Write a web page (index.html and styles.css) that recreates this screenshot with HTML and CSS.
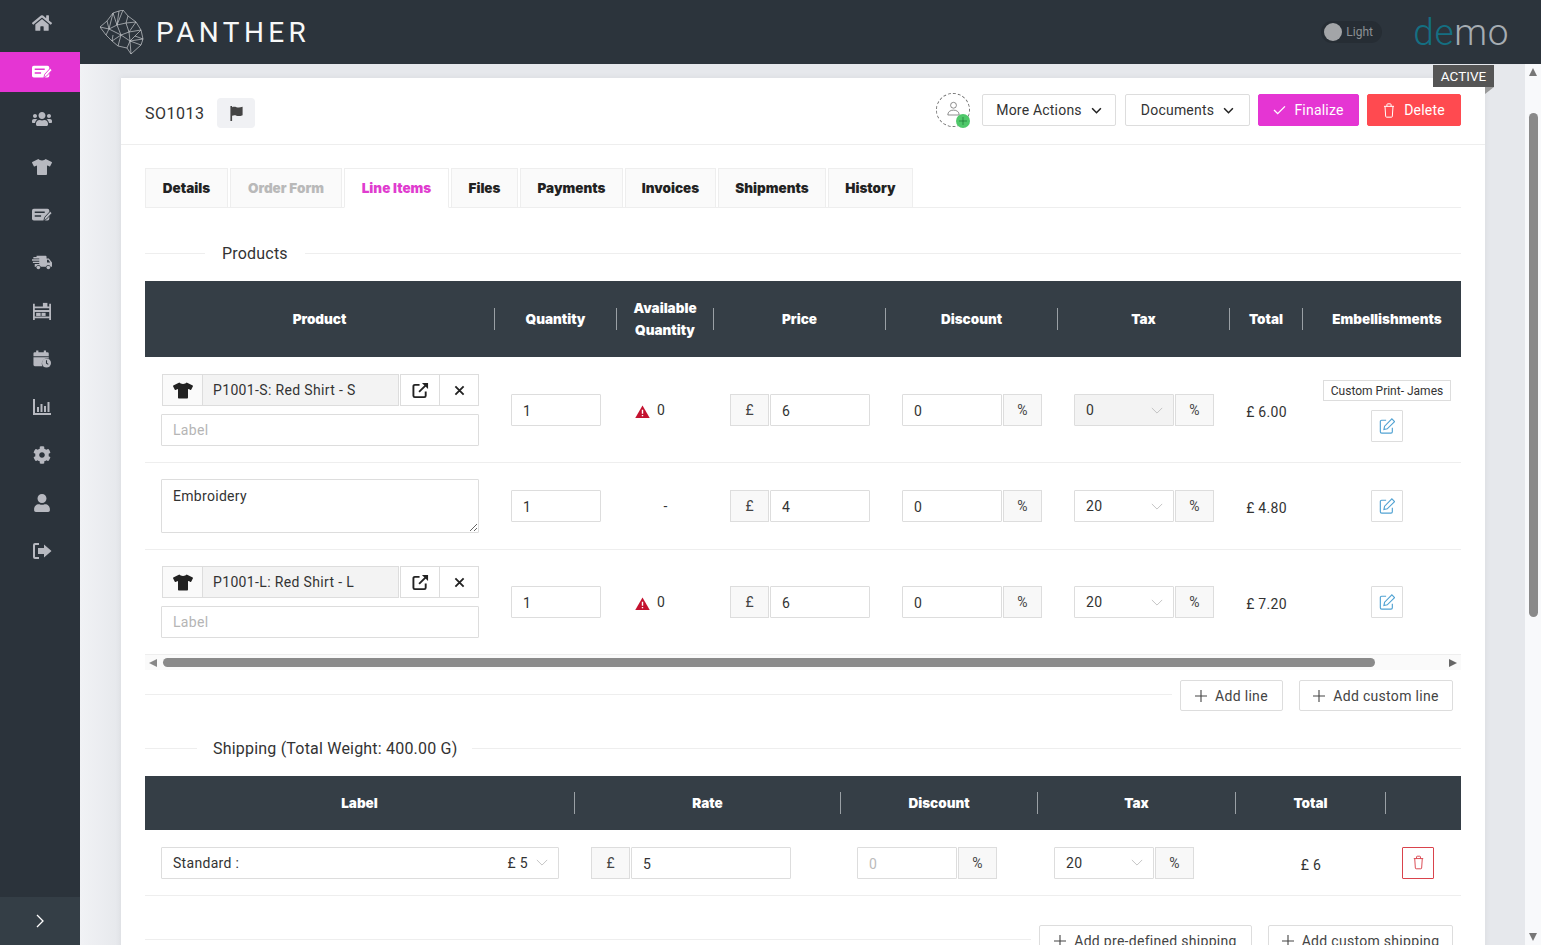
FILE: index.html
```html
<!DOCTYPE html>
<html lang="en">
<head>
<meta charset="utf-8">
<title>Panther - SO1013</title>
<link rel="stylesheet" href="styles.css">
</head>
<body>
<svg class="sprite" xmlns="http://www.w3.org/2000/svg">
  <symbol id="i-home" viewBox="0 0 576 512"><path d="M280.37 148.26L96 300.11V464a16 16 0 0 0 16 16l112.06-.29a16 16 0 0 0 15.92-16V368a16 16 0 0 1 16-16h64a16 16 0 0 1 16 16v95.64a16 16 0 0 0 16 16.05L464 480a16 16 0 0 0 16-16V300L295.67 148.26a12.19 12.19 0 0 0-15.3 0zM571.6 251.47L488 182.56V44.05a12 12 0 0 0-12-12h-56a12 12 0 0 0-12 12v72.61L318.47 43a48 48 0 0 0-61 0L4.34 251.47a12 12 0 0 0-1.6 16.9l25.5 31A12 12 0 0 0 45.15 301l235.22-193.74a12.19 12.19 0 0 1 15.3 0L530.9 301a12 12 0 0 0 16.9-1.6l25.5-31a12 12 0 0 0-1.7-16.93z"/></symbol>
  <symbol id="i-order" viewBox="0 0 22 16"><rect x="0" y="1" width="19" height="13" rx="2"/><path d="M3 5h11M3 9h7" stroke="var(--cut)" stroke-width="1.6" fill="none"/><path d="M13 14.5l1-4 6-6.5 2 2-6 6.5z" stroke="var(--cut)" stroke-width="1"/></symbol>
  <symbol id="i-users" viewBox="0 0 640 512"><path d="M96 224c35.3 0 64-28.7 64-64s-28.7-64-64-64-64 28.7-64 64 28.7 64 64 64zm448 0c35.3 0 64-28.7 64-64s-28.7-64-64-64-64 28.7-64 64 28.7 64 64 64zm32 32h-64c-17.6 0-33.5 7.1-45.1 18.6 40.3 22.1 68.9 62 75.1 109.4h66c17.7 0 32-14.3 32-32v-32c0-35.3-28.7-64-64-64zm-256 0c61.9 0 112-50.1 112-112S381.900 32 320 32 208 82.100 208 144s50.100 112 112 112zm76.800 32h-8.300c-20.800 10-43.900 16-68.500 16s-47.600-6-68.500-16h-8.300C179.600 288 128 339.600 128 403.200V432c0 26.500 21.500 48 48 48h288c26.500 0 48-21.500 48-48v-28.800c0-63.600-51.600-115.200-115.200-115.200zm-223.700-13.400C161.500 263.100 145.600 256 128 256H64c-35.300 0-64 28.700-64 64v32c0 17.700 14.300 32 32 32h65.900c6.300-47.400 34.900-87.300 75.200-109.400z"/></symbol>
  <symbol id="i-shirt" viewBox="0 0 640 512"><path d="M631.2 96.500L436.500 0C416.400 27.800 371.900 47.200 320 47.200S223.600 27.800 203.500 0L8.800 96.500c-7.900 4-11.100 13.600-7.200 21.500l57.200 114.500c4 7.900 13.600 11.100 21.500 7.200l56.600-27.700c10.600-5.200 23 2.500 23 14.400V480c0 17.700 14.300 32 32 32h256c17.700 0 32-14.300 32-32V226.300c0-11.800 12.400-19.600 23-14.400l56.600 27.700c7.900 4 17.500.8 21.500-7.200L638.300 118c4-7.900.8-17.600-7.100-21.500z"/></symbol>
  <symbol id="i-truck" viewBox="0 0 22 16"><path d="M5 0h10a1 1 0 0 1 1 1v2h2.500L22 7.500V12h-1.600a2.600 2.600 0 0 0-5 0H9.600a2.600 2.600 0 0 0-5 0H3V9h5V8H1V6.500h7v-1H0V4h8V3H1.500V1.500H5z"/><circle cx="7" cy="13" r="2"/><circle cx="18" cy="13" r="2"/><path d="M16.500 4.500V7.500h3.500l-2-3z" fill="var(--cut)"/></symbol>
  <symbol id="i-pallet" viewBox="0 0 20 20"><path d="M0 2h2v3h16V2h2v18h-2v-2H2v2H0zM2 7v2h16V7zM2 11v5h16v-5z"/><rect x="11" y="1" width="5" height="5"/><rect x="3.500" y="12" width="5" height="3.500"/><rect x="9.500" y="12" width="4.500" height="3.500"/></symbol>
  <symbol id="i-calendar" viewBox="0 0 22 20"><path d="M1.500 4A1.500 1.500 0 0 1 3 2.500h1.500V.5h2.500v2h6v-2h2.500v2H17A1.500 1.500 0 0 1 18.500 4v3H1.500zM1.500 8h17v1.500a6 6 0 0 0-7 8.500H3a1.500 1.500 0 0 1-1.500-1.500z"/><circle cx="16" cy="14.500" r="5"/><path d="M16 11.500v3.200l2 1.300" stroke="var(--cut)" stroke-width="1.200" fill="none"/></symbol>
  <symbol id="i-chart" viewBox="0 0 20 18"><path d="M1 1h2v14h16v2H1z"/><rect x="5" y="9" width="2" height="5"/><rect x="8.500" y="6" width="2" height="8"/><rect x="12" y="8" width="2" height="6"/><rect x="15.500" y="4" width="2" height="10"/></symbol>
  <symbol id="i-cog" viewBox="0 0 512 512"><path d="M487.400 315.700l-42.600-24.600c4.300-23.200 4.300-47 0-70.200l42.600-24.600c4.900-2.800 7.100-8.600 5.500-14-11.100-35.600-30-67.800-54.700-94.600-3.800-4.100-10-5.100-14.800-2.300L380.800 110c-17.900-15.400-38.500-27.300-60.800-35.100V25.800c0-5.600-3.900-10.500-9.400-11.700-36.700-8.200-74.300-7.800-109.200 0-5.500 1.200-9.400 6.100-9.400 11.700V75c-22.200 7.900-42.800 19.800-60.800 35.100L88.700 85.500c-4.900-2.800-11-1.900-14.800 2.300-24.700 26.700-43.600 58.900-54.700 94.600-1.700 5.400.6 11.200 5.500 14L67.300 221c-4.300 23.200-4.300 47 0 70.200l-42.600 24.600c-4.900 2.800-7.100 8.600-5.500 14 11.100 35.600 30 67.800 54.700 94.600 3.800 4.100 10 5.100 14.800 2.300l42.600-24.600c17.900 15.400 38.500 27.300 60.800 35.100v49.200c0 5.600 3.900 10.500 9.400 11.700 36.700 8.200 74.300 7.800 109.200 0 5.500-1.200 9.400-6.100 9.400-11.700v-49.200c22.200-7.900 42.800-19.800 60.800-35.100l42.600 24.600c4.900 2.800 11 1.900 14.800-2.300 24.700-26.700 43.600-58.900 54.700-94.600 1.500-5.500-.7-11.300-5.600-14.100zM256 336c-44.100 0-80-35.900-80-80s35.900-80 80-80 80 35.900 80 80-35.900 80-80 80z"/></symbol>
  <symbol id="i-user" viewBox="0 0 448 512"><path d="M224 256c70.700 0 128-57.300 128-128S294.700 0 224 0 96 57.300 96 128s57.300 128 128 128zm89.600 32h-16.700c-22.200 10.200-46.900 16-72.900 16s-50.600-5.800-72.900-16h-16.700C60.200 288 0 348.200 0 422.400V464c0 26.500 21.500 48 48 48h352c26.500 0 48-21.500 48-48v-41.600c0-74.200-60.200-134.400-134.400-134.400z"/></symbol>
  <symbol id="i-logout" viewBox="0 0 20 18"><path d="M7 1v2H3.500A.5.500 0 0 0 3 3.500v11a.5.500 0 0 0 .5.500H7v2H3a2 2 0 0 1-2-2V3a2 2 0 0 1 2-2z"/><path d="M12 2.500l7.500 6.500-7.500 6.500V12H6V6h6z"/></symbol>
  <symbol id="i-open" viewBox="0 0 18 18"><path d="M8 3H3a1.500 1.500 0 0 0-1.500 1.500v10A1.500 1.500 0 0 0 3 16h10a1.500 1.500 0 0 0 1.500-1.500V10" fill="none" stroke="currentColor" stroke-width="2"/><path d="M7.500 10.500L15 3" fill="none" stroke="currentColor" stroke-width="2"/><path d="M10.500 1H17v6.500z"/></symbol>
  <symbol id="i-x" viewBox="0 0 12 12"><path d="M1.500 1.500l9 9m0-9l-9 9" fill="none" stroke="currentColor" stroke-width="2"/></symbol>
  <symbol id="i-warn" viewBox="0 0 16 14"><path d="M8 0.500L15.800 14H.2z"/><path d="M8 5v4.500M8 10.800v1.400" stroke="#fff" stroke-width="1.500" fill="none"/></symbol>
  <symbol id="i-edit" viewBox="0 0 18 18"><path d="M8 2.500H3A1.500 1.500 0 0 0 1.500 4v11.500A1.500 1.500 0 0 0 3 17h10.500a1.500 1.500 0 0 0 1.500-1.500V11" fill="none" stroke="currentColor" stroke-width="1.300"/><path d="M5.500 13l.8-3.800L14.500 1l3 3-8.200 8.200z" fill="none" stroke="currentColor" stroke-width="1.300"/></symbol>
  <symbol id="i-down" viewBox="0 0 14 8"><path d="M1 1l6 6 6-6" fill="none" stroke="currentColor" stroke-width="1"/></symbol>
  <symbol id="i-chev" viewBox="0 0 12 8"><path d="M1 1.500l5 5 5-5" fill="none" stroke="currentColor" stroke-width="1.800"/></symbol>
  <symbol id="i-plus" viewBox="0 0 12 12"><path d="M6 0v12M0 6h12" fill="none" stroke="currentColor" stroke-width="1.100"/></symbol>
  <symbol id="i-trash" viewBox="0 0 14 18"><path d="M1 4h12M4.500 4V2a1 1 0 0 1 1-1h3a1 1 0 0 1 1 1v2M2.200 4l.8 12a1 1 0 0 0 1 1h6a1 1 0 0 0 1-1l.8-12" fill="none" stroke="currentColor" stroke-width="1.200"/></symbol>
</svg>

<nav class="sidebar">
  <a class="nav-item"><svg class="nav-icon"><use href="#i-home"/></svg></a>
  <a class="nav-item active"><svg class="nav-icon"><use href="#i-order"/></svg></a>
  <a class="nav-item"><svg class="nav-icon"><use href="#i-users"/></svg></a>
  <a class="nav-item"><svg class="nav-icon"><use href="#i-shirt"/></svg></a>
  <a class="nav-item"><svg class="nav-icon"><use href="#i-order"/></svg></a>
  <a class="nav-item"><svg class="nav-icon"><use href="#i-truck"/></svg></a>
  <a class="nav-item"><svg class="nav-icon"><use href="#i-pallet"/></svg></a>
  <a class="nav-item"><svg class="nav-icon"><use href="#i-calendar"/></svg></a>
  <a class="nav-item"><svg class="nav-icon"><use href="#i-chart"/></svg></a>
  <a class="nav-item"><svg class="nav-icon"><use href="#i-cog"/></svg></a>
  <a class="nav-item"><svg class="nav-icon"><use href="#i-user"/></svg></a>
  <a class="nav-item"><svg class="nav-icon"><use href="#i-logout"/></svg></a>
  <div class="nav-toggle"><svg class="toggle-chevron" viewBox="0 0 8 14"><path d="M1 1l6 6-6 6" fill="none" stroke="currentColor" stroke-width="1.300"/></svg></div>
</nav>

<div class="shell">
  <header class="topbar">
    <svg class="logo-mark" viewBox="0 0 46 46" fill="none" stroke="#c9cccf" stroke-width=".7">
      <path d="M0 17L7 11 13 3 19 1 23 0 28 6 36 12 41 20 43 29 41 35 31 44 27 38 18 36 12 31 6 25z"/>
      <path d="M0 17L9 19 13 3M7 11L9 19 6 25M9 19L17 15 13 3M17 15L19 1M17 15L23 0M17 15L26 13 28 6M26 13L36 12M26 13L29 22 41 20M29 22L36 12M17 15L21 25 9 19M21 25L29 22M21 25L12 31M21 25L18 36M21 25L30 31 29 22M30 31L43 29M30 31L27 38M30 31L31 44M30 31L41 35M35 26L41 20M35 26L43 29M35 26L30 31M13 25L12 31"/>
    </svg>
    <span class="logo-text">PANTHER</span>
    <div class="topbar-right">
      <div class="theme-toggle"><span class="theme-dot"></span><span>Light</span></div>
      <div class="brand-demo"><span class="brand-de">de</span>mo</div>
    </div>
  </header>

  <div class="workspace">
    <main class="content">
      <section class="card">
        <div class="ribbon">ACTIVE</div>
        <div class="card-head">
          <span class="order-no">SO1013</span>
          <button class="flag-btn"><svg class="flag-icon" viewBox="0 0 16 16"><path d="M1.500 0h1.800v1.200C5 .5 6.500.6 8 1.200s3.500.7 6.500-.4v9c-3 1.200-5 1.100-6.500.5s-3-.6-4.700.1V16H1.500z"/></svg></button>
          <div class="head-actions">
            <div class="assign">
              <svg class="assign-user" viewBox="0 0 16 18" fill="none" stroke="#666" stroke-width=".9"><circle cx="8" cy="5" r="3.600"/><path d="M1 17c0-4 3-6 7-6s7 2 7 6z"/></svg>
              <span class="assign-plus"><svg class="assign-plus-icon"><use href="#i-plus"/></svg></span>
            </div>
            <button class="btn btn-more">More Actions <svg class="btn-chevron"><use href="#i-chev"/></svg></button>
            <button class="btn btn-docs">Documents <svg class="btn-chevron"><use href="#i-chev"/></svg></button>
            <button class="btn btn-finalize"><svg class="btn-check" viewBox="0 0 14 11"><path d="M1 5.500l4 4 8-8" fill="none" stroke="currentColor" stroke-width="1.500"/></svg>Finalize</button>
            <button class="btn btn-delete"><svg class="btn-trash"><use href="#i-trash"/></svg>Delete</button>
          </div>
        </div>

        <div class="card-body">
          <div class="tabs">
            <a class="tab">Details</a>
            <a class="tab tab-muted">Order Form</a>
            <a class="tab tab-active">Line Items</a>
            <a class="tab">Files</a>
            <a class="tab">Payments</a>
            <a class="tab">Invoices</a>
            <a class="tab">Shipments</a>
            <a class="tab">History</a>
          </div>

          <h3 class="legend legend-products"><span>Products</span></h3>

          <div class="table">
            <div class="t-row t-head products-grid products-head">
              <div class="th"><span>Product</span></div>
              <div class="th"><span>Quantity</span></div>
              <div class="th"><span>Available<br>Quantity</span></div>
              <div class="th"><span>Price</span></div>
              <div class="th"><span>Discount</span></div>
              <div class="th"><span>Tax</span></div>
              <div class="th"><span>Total</span></div>
              <div class="th th-last"><span>Embellishments</span></div>
            </div>

            <div class="t-row products-grid row-first">
              <div class="td td-product">
                <div class="group">
                  <span class="addon addon-shirt"><svg class="shirt-icon"><use href="#i-shirt"/></svg></span>
                  <span class="readonly">P1001-S: Red Shirt - S</span>
                  <span class="addon addon-white addon-open"><svg class="open-icon"><use href="#i-open"/></svg></span>
                  <span class="addon addon-white addon-close"><svg class="x-icon"><use href="#i-x"/></svg></span>
                </div>
                <input class="input input-label" placeholder="Label">
              </div>
              <div class="td"><input class="input" value="1"></div>
              <div class="td td-stock"><svg class="warn-icon"><use href="#i-warn"/></svg><span>0</span></div>
              <div class="td"><div class="group"><span class="addon addon-unit">£</span><input class="input input-join" value="6"></div></div>
              <div class="td"><div class="group"><input class="input input-join" value="0"><span class="addon addon-unit">%</span></div></div>
              <div class="td"><div class="group"><div class="select select-disabled"><span>0</span><svg class="select-chevron"><use href="#i-down"/></svg></div><span class="addon addon-unit">%</span></div></div>
              <div class="td td-center td-total">£ 6.00</div>
              <div class="td td-center td-emb">
                <span class="emb-tag">Custom Print- James</span>
                <button class="icon-btn"><svg class="edit-icon"><use href="#i-edit"/></svg></button>
              </div>
            </div>

            <div class="t-row products-grid">
              <div class="td td-product"><textarea class="textarea">Embroidery</textarea></div>
              <div class="td"><input class="input" value="1"></div>
              <div class="td td-center td-avail"><span>-</span></div>
              <div class="td"><div class="group"><span class="addon addon-unit">£</span><input class="input input-join" value="4"></div></div>
              <div class="td"><div class="group"><input class="input input-join" value="0"><span class="addon addon-unit">%</span></div></div>
              <div class="td"><div class="group"><div class="select"><span>20</span><svg class="select-chevron"><use href="#i-down"/></svg></div><span class="addon addon-unit">%</span></div></div>
              <div class="td td-center td-total">£ 4.80</div>
              <div class="td td-center"><button class="icon-btn"><svg class="edit-icon"><use href="#i-edit"/></svg></button></div>
            </div>

            <div class="t-row products-grid">
              <div class="td td-product">
                <div class="group">
                  <span class="addon addon-shirt"><svg class="shirt-icon"><use href="#i-shirt"/></svg></span>
                  <span class="readonly">P1001-L: Red Shirt - L</span>
                  <span class="addon addon-white addon-open"><svg class="open-icon"><use href="#i-open"/></svg></span>
                  <span class="addon addon-white addon-close"><svg class="x-icon"><use href="#i-x"/></svg></span>
                </div>
                <input class="input input-label" placeholder="Label">
              </div>
              <div class="td"><input class="input" value="1"></div>
              <div class="td td-stock"><svg class="warn-icon"><use href="#i-warn"/></svg><span>0</span></div>
              <div class="td"><div class="group"><span class="addon addon-unit">£</span><input class="input input-join" value="6"></div></div>
              <div class="td"><div class="group"><input class="input input-join" value="0"><span class="addon addon-unit">%</span></div></div>
              <div class="td"><div class="group"><div class="select"><span>20</span><svg class="select-chevron"><use href="#i-down"/></svg></div><span class="addon addon-unit">%</span></div></div>
              <div class="td td-center td-total">£ 7.20</div>
              <div class="td td-center"><button class="icon-btn"><svg class="edit-icon"><use href="#i-edit"/></svg></button></div>
            </div>
          </div>

          <div class="hscroll">
            <span class="arrow arrow-left"></span>
            <span class="hscroll-thumb"></span>
            <span class="arrow arrow-right"></span>
          </div>

          <div class="add-row">
            <button class="btn btn-add"><svg class="plus-icon"><use href="#i-plus"/></svg>Add line</button>
            <button class="btn btn-add"><svg class="plus-icon"><use href="#i-plus"/></svg>Add custom line</button>
          </div>

          <h3 class="legend legend-shipping"><span>Shipping (Total Weight: 400.00 G)</span></h3>

          <div class="table">
            <div class="t-row t-head shipping-grid shipping-head">
              <div class="th"><span>Label</span></div>
              <div class="th"><span>Rate</span></div>
              <div class="th"><span>Discount</span></div>
              <div class="th"><span>Tax</span></div>
              <div class="th"><span>Total</span></div>
              <div class="th th-last"></div>
            </div>
            <div class="t-row shipping-grid shipping-row">
              <div class="td"><div class="select"><span>Standard :</span><span class="select-price">£ 5</span><svg class="select-chevron"><use href="#i-down"/></svg></div></div>
              <div class="td"><div class="group group-rate"><span class="addon addon-unit">£</span><input class="input input-join" value="5"></div></div>
              <div class="td"><div class="group group-fixed"><input class="input input-join input-muted" value="0"><span class="addon addon-unit">%</span></div></div>
              <div class="td"><div class="group group-fixed"><div class="select"><span>20</span><svg class="select-chevron"><use href="#i-down"/></svg></div><span class="addon addon-unit">%</span></div></div>
              <div class="td td-center td-total">£ 6</div>
              <div class="td td-del"><button class="icon-btn icon-btn-danger"><svg class="del-icon"><use href="#i-trash"/></svg></button></div>
            </div>
          </div>

          <div class="add-row add-row-shipping">
            <button class="btn btn-add"><svg class="plus-icon"><use href="#i-plus"/></svg>Add pre-defined shipping</button>
            <button class="btn btn-add"><svg class="plus-icon"><use href="#i-plus"/></svg>Add custom shipping</button>
          </div>
        </div>
      </section>
    </main>

    <div class="vscroll">
      <span class="arrow arrow-up"></span>
      <span class="vscroll-thumb"></span>
      <span class="arrow arrow-down"></span>
    </div>
  </div>
</div>
</body>
</html>
```

FILE: styles.css
```css
* { box-sizing: border-box; }

html, body { height: 100%; }

body {
  margin: 0;
  height: 100vh;
  overflow: hidden;
  display: flex;
  font-family: Roboto, "Liberation Sans", sans-serif;
  font-size: 14px;
  color: #333;
  background: #e9ebef;
}

.sprite { width: 0; height: 0; position: absolute; }

button, input, textarea { font: inherit; color: inherit; }

/* Sidebar */
.sidebar {
  width: 80px;
  flex: none;
  display: flex;
  flex-direction: column;
  gap: 8px;
  padding-top: 3px;
  background: #2b333b;
  --cut: #2b333b;
  color: #b7b9c0;
}

.nav-item {
  height: 40px;
  display: flex;
  align-items: center;
  justify-content: center;
  padding-left: 4px;
  fill: #b7b9c0;
}

.nav-item.active {
  margin-top: 1px;
  margin-bottom: -1px;
  background: #e535d3;
  fill: #fff;
  --cut: #e535d3;
}

.nav-icon { width: 20px; height: 18px; }

.nav-toggle {
  margin-top: auto;
  height: 48px;
  background: #343e46;
  color: #fff;
  display: flex;
  align-items: center;
  justify-content: center;
}

.toggle-chevron { width: 8px; height: 14px; }

/* Top bar */
.shell {
  flex: 1;
  min-width: 0;
  display: flex;
  flex-direction: column;
}

.topbar {
  height: 64px;
  flex: none;
  display: flex;
  align-items: center;
  padding: 0 32px 0 20px;
  background: #2c343c;
}

.logo-mark { width: 46px; height: 46px; margin-right: 10px; margin-top: 1px; }

.logo-text {
  font-size: 28px;
  font-weight: 400;
  letter-spacing: 4.4px;
  margin-top: 1px;
  color: #f7f8f8;
}

.topbar-right {
  margin-left: auto;
  display: flex;
  align-items: center;
  gap: 31px;
}

.theme-toggle {
  display: flex;
  align-items: center;
  gap: 4px;
  width: 61px;
  height: 22px;
  padding-left: 3px;
  border-radius: 11px;
  background: #262d34;
  font-size: 12px;
  color: #8d9195;
}

.theme-dot {
  width: 18px;
  height: 18px;
  border-radius: 50%;
  background: #a3a5a8;
}

.brand-demo {
  font-size: 37px;
  font-weight: 300;
  letter-spacing: .6px;
  color: #a6adb3;
  line-height: 1;
}

.brand-de { color: #146f82; }

/* Workspace */
.workspace {
  flex: 1;
  min-height: 0;
  display: flex;
}

.content {
  flex: 1;
  min-width: 0;
  padding: 14px 40px 0 41px;
  overflow: hidden;
  background: linear-gradient(to right, #f1f2f5, #e6e8ec 41px);
}

.card {
  position: relative;
  background: #fff;
  box-shadow: 0 0 6px rgba(60, 70, 80, .08);
}

.ribbon {
  position: absolute;
  top: -13px;
  right: -9px;
  width: 61px;
  height: 22px;
  display: flex;
  align-items: center;
  justify-content: center;
  font-size: 13.5px;
  color: #fff;
  background: #555;
  z-index: 1;
}

.ribbon::after {
  content: "";
  position: absolute;
  top: 22px;
  right: 0;
  border-style: solid;
  border-width: 7px 9px 0 0;
  border-color: #999 transparent transparent transparent;
}

.card-head {
  height: 67px;
  display: flex;
  align-items: center;
  padding: 0 24px;
  border-bottom: 1px solid #eee;
}

.order-no {
  font-size: 16px;
  letter-spacing: .5px;
  margin: 4px 13px 0 0;
  color: #333;
}

.flag-btn {
  width: 38px;
  height: 30px;
  margin-top: 4px;
  border: 0;
  border-radius: 4px;
  background: #f0f1f4;
  display: flex;
  align-items: center;
  justify-content: center;
  padding: 0;
}

.flag-icon { width: 15px; height: 15px; fill: #444; }

.head-actions {
  margin-left: auto;
  margin-top: -2px;
  display: flex;
  align-items: center;
}

.assign {
  position: relative;
  width: 34px;
  height: 34px;
  margin-right: 12px;
  border: 1px dashed #777;
  border-radius: 50%;
  display: flex;
  align-items: center;
  justify-content: center;
}

.assign-user { width: 13px; height: 15px; margin-top: -3px; }

.assign-plus {
  position: absolute;
  right: -1px;
  bottom: -2px;
  width: 14px;
  height: 14px;
  border-radius: 50%;
  background: #4fc86a;
  color: #1f7a38;
  display: flex;
  align-items: center;
  justify-content: center;
}

.assign-plus-icon { width: 8px; height: 8px; }

.btn {
  height: 32px;
  display: inline-flex;
  align-items: center;
  justify-content: center;
  padding: 0;
  border: 1px solid #ddd;
  border-radius: 2px;
  background: #fff;
  font-size: 14px;
  letter-spacing: .2px;
  color: #333;
  white-space: nowrap;
}

.btn-more { width: 134px; margin-right: 9px; }
.btn-docs { width: 125px; margin-right: 8px; }

.btn-chevron { width: 11px; height: 7px; margin-left: 9px; color: #222; }

.btn-finalize {
  width: 101px;
  margin-right: 8px;
  border-color: #e535d3;
  background: #e535d3;
  color: #fff;
}

.btn-delete {
  width: 94px;
  border-color: #ff4a50;
  background: #ff4a50;
  color: #fff;
}

.btn-check { width: 13px; height: 10px; margin-right: 8px; }
.btn-trash { width: 12px; height: 15px; margin-right: 9px; }

.card-body { padding: 23px 24px 0; }

/* Tabs */
.tabs {
  display: grid;
  grid-template-columns: 83px 112px 105px 67px 103px 91px 108px 85px;
  column-gap: 2px;
  height: 40px;
  border-bottom: 1px solid #eee;
}

.tab {
  height: 40px;
  display: flex;
  align-items: center;
  justify-content: center;
  border: 1px solid #eee;
  background: #fafafa;
  font-family: Inter, Roboto, sans-serif;
  font-weight: 900;
  font-size: 13.5px;
  color: #222;
}

.tab-muted { color: #b9b9b9; }

.tab-active {
  background: #fff;
  border-bottom-color: #fff;
  color: #e03ccf;
}

/* Section legend */
.legend {
  margin: 34px 0 17px;
  height: 22px;
  display: flex;
  align-items: center;
  font-size: 16px;
  font-weight: 400;
  letter-spacing: .2px;
  color: #333;
}

.legend span { padding-top: 1px; }

.legend::before {
  content: "";
  height: 1px;
  background: #eee;
}

.legend::after {
  content: "";
  flex: 1;
  height: 1px;
  background: #eee;
}

.legend-products::before { width: 60px; margin-right: 17px; }
.legend-products::after { margin-left: 17px; }

.legend-shipping { margin-top: 26px; }
.legend-shipping::before { width: 52px; margin-right: 16px; }
.legend-shipping::after { margin-left: 15px; }

/* Tables */
.table { overflow: hidden; }

.t-row { display: grid; align-items: center; }

.products-grid { grid-template-columns: 350px 122px 97px 172px 172px 172px 73px 168px; width: 1326px; }
.shipping-grid { grid-template-columns: 430px 266px 197px 198px 150px 75px; }

.products-grid:not(.t-head) { box-shadow: inset 0 -1px 0 #eee; padding-bottom: 1px; }
.row-first { padding-top: 1px; }

.t-head {
  background: #353e46;
  color: #fff;
  font-family: Inter, Roboto, sans-serif;
  font-weight: 900;
  font-size: 13.5px;
}

.products-head { height: 76px; }
.shipping-head { height: 54px; }

.th {
  height: 22px;
  display: flex;
  align-items: center;
  justify-content: center;
  text-align: center;
  line-height: 22px;
  border-right: 1px solid #9aa0a5;
}

.th-last { border-right: 0; }

.td { padding: 0 16px; min-width: 0; }

.td-product { padding-top: 16px; padding-bottom: 16px; }

.td-center {
  display: flex;
  align-items: center;
  justify-content: center;
}

.td-total { padding: 4px 0 0; letter-spacing: .3px; }
.td-avail { padding: 0; }

.td-stock {
  display: flex;
  align-items: center;
  gap: 7px;
  padding: 0 0 0 18px;
}

.td-emb {
  flex-direction: column;
  gap: 9px;
  padding: 1px 0 0;
}

.shipping-row {
  height: 66px;
  padding-bottom: 1px;
  box-shadow: inset 0 -1px 0 #eee;
}

/* Inputs */
.group { display: flex; height: 32px; }
.group-rate { width: 200px; }
.group-fixed { width: 140px; }

.addon {
  flex: none;
  display: flex;
  align-items: center;
  justify-content: center;
  height: 32px;
  border: 1px solid #ddd;
  background: #f8f8f8;
  color: #444;
}

.addon-unit { width: 39px; }
.group .input-join + .addon-unit, .group .select + .addon-unit { margin-left: 1px; }
.addon-unit + .input-join { margin-left: 1px; }

.addon-shirt { width: 41px; background: #fafafa; margin-left: 1px; }
.addon-white { background: #fff; }
.addon-open { width: 39px; margin-left: 1px; border-right: 0; }
.addon-close { width: 40px; }

.readonly {
  flex: 1;
  min-width: 0;
  display: flex;
  align-items: center;
  padding-left: 10px;
  background: #f3f3f3;
  border: 1px solid #ddd;
  border-left: 0;
  letter-spacing: .35px;
  color: #333;
}

.shirt-icon { width: 20px; height: 17px; fill: #222; }
.open-icon { width: 17px; height: 17px; fill: #222; color: #222; }
.x-icon { width: 11px; height: 11px; color: #222; }

.input {
  display: block;
  width: 100%;
  height: 32px;
  padding: 2px 11px 0;
  border: 1px solid #ddd;
  border-radius: 1px;
  outline: 0;
  background: #fff;
  color: #333;
  letter-spacing: .3px;
}

.input::placeholder { color: #b5b5b5; opacity: 1; }

.input-join { flex: 1; min-width: 0; }
.input-muted { color: #bbb; }

.input-label {
  margin-top: 8px;
  padding: 0 11px;
}

.textarea {
  display: block;
  width: 100%;
  height: 54px;
  padding: 7px 11px;
  border: 1px solid #ddd;
  border-radius: 1px;
  outline: 0;
  resize: vertical;
  letter-spacing: .3px;
  line-height: 18px;
}

.select {
  flex: 1;
  min-width: 0;
  height: 32px;
  display: flex;
  align-items: center;
  padding: 0 10px 0 11px;
  border: 1px solid #ddd;
  border-radius: 1px;
  background: #fff;
  letter-spacing: .3px;
}

.select-disabled { background: #f3f3f3; }

.select-price { margin-left: auto; margin-right: 8px; }

.select-chevron {
  width: 12px;
  height: 7px;
  margin-left: auto;
  color: #bbb;
}

.select-price + .select-chevron { margin-left: 0; }

.warn-icon { width: 15px; height: 13px; fill: #c4122f; margin-top: 3px; }

.emb-tag {
  display: inline-block;
  width: 128px;
  height: 21px;
  line-height: 20px;
  border: 1px solid #ddd;
  text-align: center;
  font-size: 12px;
  white-space: nowrap;
}

.icon-btn {
  width: 32px;
  height: 32px;
  padding: 0;
  border: 1px solid #ddd;
  border-radius: 1px;
  background: #fff;
  display: flex;
  align-items: center;
  justify-content: center;
}

.edit-icon { width: 16px; height: 16px; color: #52a3d3; }

.icon-btn-danger {
  border-color: #d9434c;
  color: #d9434c;
}

.del-icon { width: 11px; height: 15px; }

/* Horizontal scroll bar */
.hscroll {
  height: 15px;
  display: flex;
  align-items: center;
  padding: 0 4px;
  background: #fafafa;
}

.hscroll-thumb {
  width: 1212px;
  height: 9px;
  margin-left: 6px;
  border-radius: 5px;
  background: #8a8a8a;
}

.arrow { display: block; width: 0; height: 0; border-style: solid; }

.arrow-left { border-width: 4.5px 8px 4.5px 0; border-color: transparent #888 transparent transparent; }
.arrow-right { margin-left: auto; border-width: 4.5px 0 4.5px 8px; border-color: transparent transparent transparent #666; }

/* Add buttons */
.add-row {
  display: flex;
  justify-content: flex-end;
  align-items: center;
  gap: 16px;
  margin-top: 10px;
  padding-right: 8px;
}

.add-row::before {
  content: "";
  flex: 1;
  height: 1px;
  margin: 0 -8px 2px 0;
  background: #eee;
}

.add-row-shipping { margin-top: 29px; }

.btn-add { height: 31px; letter-spacing: .3px; color: #444; }

.plus-icon { width: 12px; height: 12px; margin-right: 8px; }

.add-row .btn-add:nth-child(1) { width: 103px; }
.add-row .btn-add:nth-child(2) { width: 154px; }
.add-row-shipping .btn-add:nth-child(1) { width: 213px; }
.add-row-shipping .btn-add:nth-child(2) { width: 185px; }

/* Vertical scroll bar */
.vscroll {
  width: 16px;
  flex: none;
  display: flex;
  flex-direction: column;
  align-items: center;
  padding: 4px 0;
  background: #f8f9fb;
}

.arrow-up { border-width: 0 4.5px 8px 4.5px; border-color: transparent transparent #777 transparent; }
.arrow-down { margin-top: auto; border-width: 8px 4.5px 0 4.5px; border-color: #777 transparent transparent transparent; }

.vscroll-thumb {
  width: 9px;
  height: 504px;
  margin-top: 37px;
  border-radius: 5px;
  background: #8a8a8a;
}
```
